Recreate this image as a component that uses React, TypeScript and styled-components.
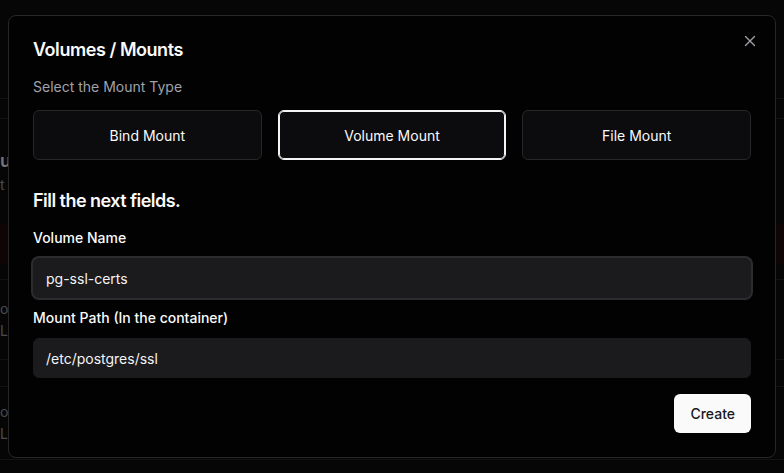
import React from "react";
import styled, { createGlobalStyle, css } from "styled-components";

const GlobalStyle = createGlobalStyle`
  html, body { margin: 0; padding: 0; }
  body {
    background: #0b0b0c;
    font-family: Inter, "Noto Sans", sans-serif;
    color: #fafafa;
    -webkit-font-smoothing: antialiased;
  }
  * { box-sizing: border-box; }
`;

/* ---------- background page (behind the overlay) ---------- */
const Page = styled.div`
  height: 473px;
  overflow: hidden;
  display: flex;
  flex-direction: column;
  background: #0b0b0c;
`;

const Band = styled.div<{ $h: number; $line?: boolean; $tone?: string }>`
  height: ${(p) => p.$h}px;
  flex: none;
  border-bottom: ${(p) => (p.$line ? "1px solid #1f1f22" : "none")};
  background: ${(p) => p.$tone || "transparent"};
  display: flex;
  flex-direction: column;
  justify-content: center;
  align-items: flex-start;
  gap: 6px;
`;

const BgHeading = styled.span`
  font-size: 18px;
  line-height: 20px;
  font-weight: 600;
  color: #c4c4c8;
`;

const BgText = styled.span`
  font-size: 14px;
  line-height: 16px;
  color: #7b7b83;
`;

const Overlay = styled.div`
  position: fixed;
  inset: 0;
  background: rgba(0, 0, 0, 0.4);
`;

/* ---------- dialog ---------- */
const Dialog = styled.div`
  position: fixed;
  left: 8px;
  top: 15px;
  width: 768px;
  height: 443px;
  background: #020202;
  border: 1px solid #27272a;
  border-radius: 8px;
  padding: 24px;
  display: flex;
  flex-direction: column;
`;

const Title = styled.h2`
  margin: 0;
  font-size: 18px;
  line-height: 20px;
  font-weight: 600;
  color: #fafafa;
  letter-spacing: -0.025em;
`;

const CloseButton = styled.button`
  position: absolute;
  top: 16px;
  right: 16px;
  width: 18px;
  height: 18px;
  padding: 0;
  border: none;
  background: none;
  color: #a1a1aa;
  display: flex;
  align-items: center;
  justify-content: center;
  cursor: pointer;
`;

const Subtitle = styled.p`
  margin: 17px 0 0;
  font-size: 14px;
  line-height: 20px;
  color: #a1a1aa;
`;

const TypeGrid = styled.div`
  margin-top: 13px;
  display: grid;
  grid-template-columns: repeat(3, 1fr);
  gap: 16px;
`;

const TypeButton = styled.button<{ $active?: boolean }>`
  height: 50px;
  border-radius: 6px;
  background: #0c0c0e;
  border: 1px solid #27272a;
  color: #fafafa;
  font-family: inherit;
  font-size: 14px;
  font-weight: 400;
  cursor: pointer;
  ${(p) =>
    p.$active &&
    css`
      border-color: #f4f4f5;
      box-shadow: inset 0 0 0 1px #f4f4f5;
    `}
`;

const SectionTitle = styled.h3`
  margin: 31px 0 0;
  font-size: 18px;
  line-height: 20px;
  font-weight: 600;
  color: #fafafa;
  letter-spacing: -0.03em;
`;

const Label = styled.label<{ $first?: boolean }>`
  display: block;
  margin-top: ${(p) => (p.$first ? 17 : 10)}px;
  font-size: 14px;
  line-height: 20px;
  font-weight: 500;
  color: #fafafa;
`;

const Input = styled.input<{ $focused?: boolean }>`
  display: block;
  width: 100%;
  margin-top: 10px;
  height: 40px;
  padding: 0 12px;
  border-radius: 6px;
  border: 1px solid #1b1b1d;
  background: #1b1b1d;
  color: #f4f4f5;
  font-family: inherit;
  font-size: 14px;
  outline: none;
  ${(p) =>
    p.$focused &&
    css`
      box-shadow: 0 0 0 2px #2c2c2f;
    `}
`;

const Footer = styled.div`
  margin-top: 16px;
  display: flex;
  justify-content: flex-end;
`;

const PrimaryButton = styled.button`
  height: 39px;
  padding: 0 16px;
  border-radius: 6px;
  border: none;
  background: #fafafa;
  color: #18181b;
  font-family: inherit;
  font-size: 14px;
  font-weight: 500;
  cursor: pointer;
`;

const XIcon = () => (
  <svg width="18" height="18" viewBox="0 0 24 24" fill="none" stroke="currentColor" strokeWidth="1.8" strokeLinecap="round">
    <path d="M18 6 6 18" />
    <path d="m6 6 12 12" />
  </svg>
);

export default function App() {
  return (
    <>
      <GlobalStyle />
      <Page>
        <Band $h={99} $line />
        <Band $h={20} $line />
        <Band $h={105}>
          <BgHeading>u</BgHeading>
          <BgText>t</BgText>
        </Band>
        <Band $h={40} $tone="#1a0907" />
        <Band $h={16} $line />
        <Band $h={80} $line>
          <BgText>o</BgText>
          <BgText>L</BgText>
        </Band>
        <Band $h={27} $line />
        <Band $h={73} $line>
          <BgText>o</BgText>
          <BgText>L</BgText>
        </Band>
      </Page>
      <Overlay />
      <Dialog role="dialog">
        <Title>Volumes / Mounts</Title>
        <CloseButton aria-label="Close">
          <XIcon />
        </CloseButton>
        <Subtitle>Select the Mount Type</Subtitle>
        <TypeGrid>
          <TypeButton>Bind Mount</TypeButton>
          <TypeButton $active>Volume Mount</TypeButton>
          <TypeButton>File Mount</TypeButton>
        </TypeGrid>
        <SectionTitle>Fill the next fields.</SectionTitle>
        <Label $first>Volume Name</Label>
        <Input $focused defaultValue="pg-ssl-certs" />
        <Label>Mount Path (In the container)</Label>
        <Input defaultValue="/etc/postgres/ssl" />
        <Footer>
          <PrimaryButton>Create</PrimaryButton>
        </Footer>
      </Dialog>
    </>
  );
}
